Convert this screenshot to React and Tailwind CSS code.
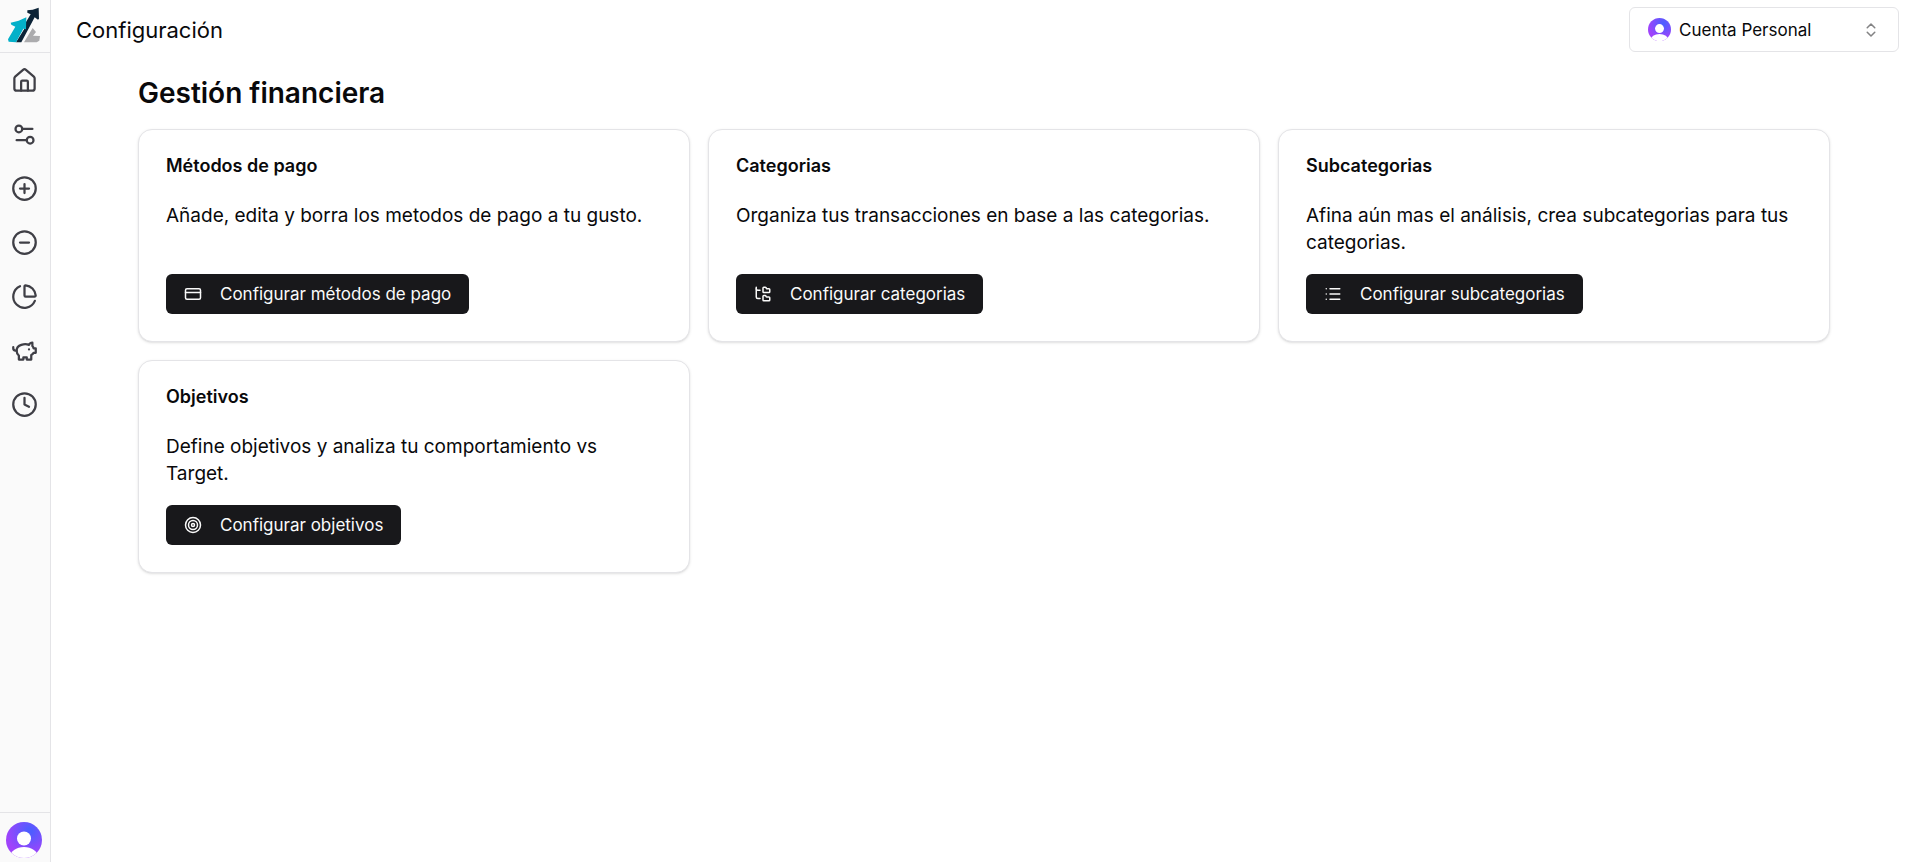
import { useId } from "react";
import { House, Settings2, CirclePlus, CircleMinus, ChartPie, Clock, CreditCard, FolderTree, List, ChevronsUpDown } from "lucide-react";

function Logo() {
  return (
    <svg viewBox="0 0 120 132" className="h-11 w-10" aria-hidden="true">
      <path d="M36 115 L64 70 L66 54 L80 31 L70 26 L70 19 L86 17 L104 11 L105 44 L102 47 L92 40 L52 115 Z" fill="#0b2337" />
      <path d="M12 106 L34 68 L22 62 L20 56 L44 50 L67 40 L66 76 L58 74 L36 115 L14 113 Z" fill="#04b0c9" />
      <path d="M86 72 L96 84 L87 95 L108 96 L106 110 L98 115 L60 115 Z" fill="#acacae" />
    </svg>
  );
}

function Avatar({ className }) {
  const id = useId();
  return (
    <svg viewBox="0 0 36 36" className={className} aria-hidden="true">
      <defs>
        <radialGradient id={id} cx="0.66" cy="0.25" r="0.65">
          <stop offset="0.1" stopColor="#4f5dff" />
          <stop offset="1" stopColor="#9f43fb" />
        </radialGradient>
        <clipPath id={id + "c"}>
          <circle cx="18" cy="18" r="18" />
        </clipPath>
      </defs>
      <g clipPath={`url(#${id}c)`}>
        <rect width="36" height="36" fill={`url(#${id})`} />
        <circle cx="18" cy="16.500" r="7" fill="#fff" />
        <ellipse cx="18" cy="35" rx="14" ry="10" fill="#fff" />
      </g>
    </svg>
  );
}

function PiggyBank({ className }) {
  return (
    <svg viewBox="0 0 24 24" className={className} fill="none" stroke="currentColor" strokeWidth="2" strokeLinecap="round" strokeLinejoin="round" aria-hidden="true">
      <path d="M19 5c-1.5 0-2.8 1.4-3 2-3.5-1.5-11-.3-11 5 0 1.800 0 3 2 4.500V20h4v-2h3v2h4v-4c1-.5 1.700-1 2-2h2v-4h-2c0-1-.5-1.500-1-2V5z" />
      <path d="M2 9v1c0 1.100.9 2 2 2h1" />
      <path d="M16 11h.01" />
    </svg>
  );
}

function Target({ className }) {
  return (
    <svg viewBox="0 0 24 24" className={className} fill="none" stroke="currentColor" strokeWidth="2" aria-hidden="true">
      <circle cx="12" cy="12" r="10" />
      <circle cx="12" cy="12" r="6" />
      <circle cx="12" cy="12" r="2" />
    </svg>
  );
}

const nav = [
  { label: "Inicio", icon: House },
  { label: "Configuración", icon: Settings2 },
  { label: "Ingresos", icon: CirclePlus },
  { label: "Gastos", icon: CircleMinus },
  { label: "Informes", icon: ChartPie },
  { label: "Ahorros", icon: PiggyBank },
  { label: "Historial", icon: Clock },
];

const cards = [
  { title: "Métodos de pago", text: "Añade, edita y borra los metodos de pago a tu gusto.", action: "Configurar métodos de pago", icon: CreditCard },
  { title: "Categorias", text: "Organiza tus transacciones en base a las categorias.", action: "Configurar categorias", icon: FolderTree },
  { title: "Subcategorias", text: "Afina aún mas el análisis, crea subcategorias para tus categorias.", action: "Configurar subcategorias", icon: List },
  { title: "Objetivos", text: "Define objetivos y analiza tu comportamiento vs Target.", action: "Configurar objetivos", icon: Target },
];

function Sidebar() {
  return (
    <aside className="flex w-[51px] shrink-0 flex-col border-r border-[#e4e4e7] bg-[#fafafa]">
      <a href="#inicio" aria-label="Inicio" className="flex h-[53px] items-center justify-center border-b border-[#e4e4e7] pr-0.5">
        <Logo />
      </a>
      <nav className="flex flex-1 flex-col pr-px">
        {nav.map(({ label, icon: Icon }) => (
          <a key={label} href={"#" + label.toLowerCase()} aria-label={label} className="flex h-[54px] items-center justify-center text-[#3f3f46]">
            <Icon className="size-[27px]" />
          </a>
        ))}
      </nav>
      <button type="button" aria-label="Perfil" className="flex h-[50px] items-start justify-center border-t border-[#e4e4e7] pt-[9px] pr-0.5">
        <Avatar className="size-9" />
      </button>
    </aside>
  );
}

function Card({ title, text, action, icon: Icon }) {
  return (
    <article className="flex flex-col items-start rounded-[14px] border border-[#e4e4e7] bg-white p-[27px] shadow-sm">
      <h3 className="text-[18px] leading-[18px] font-semibold">{title}</h3>
      <p className="mt-[27px] min-h-[54px] text-[19px] leading-[27px]">{text}</p>
      <button type="button" className="mt-[18px] flex h-10 items-center rounded-md bg-[#18181b] px-[18px] text-[17px] leading-6 text-[#fafafa]">
        <Icon className="mr-[18px] size-[18px]" />
        {action}
      </button>
    </article>
  );
}

export default function App() {
  return (
    <div className="flex min-h-screen bg-white font-[Inter,sans-serif] text-[#09090b]">
      <Sidebar />
      <div className="min-w-0 flex-1">
        <header className="flex items-center justify-between pt-[7px] pr-[13px] pl-[25px]">
          <h1 className="text-[22px] leading-7">Configuración</h1>
          <label className="flex h-[45px] w-[270px] items-center rounded-md border border-[#e4e4e7] px-[18px]">
            <Avatar className="size-[23px] shrink-0" />
            <select aria-label="Cuenta" className="ml-2 min-w-0 flex-1 appearance-none bg-transparent text-[17px] leading-6">
              <option>Cuenta Personal</option>
            </select>
            <ChevronsUpDown className="size-[18px] shrink-0 opacity-50" />
          </label>
        </header>
        <main className="pt-[23px] pr-[82px] pl-[87px]">
          <h2 className="text-[28px] leading-9 font-semibold">Gestión financiera</h2>
          <section className="mt-[18px] grid grid-cols-3 gap-[18px]">
            {cards.map((card) => (
              <Card key={card.title} {...card} />
            ))}
          </section>
        </main>
      </div>
    </div>
  );
}
